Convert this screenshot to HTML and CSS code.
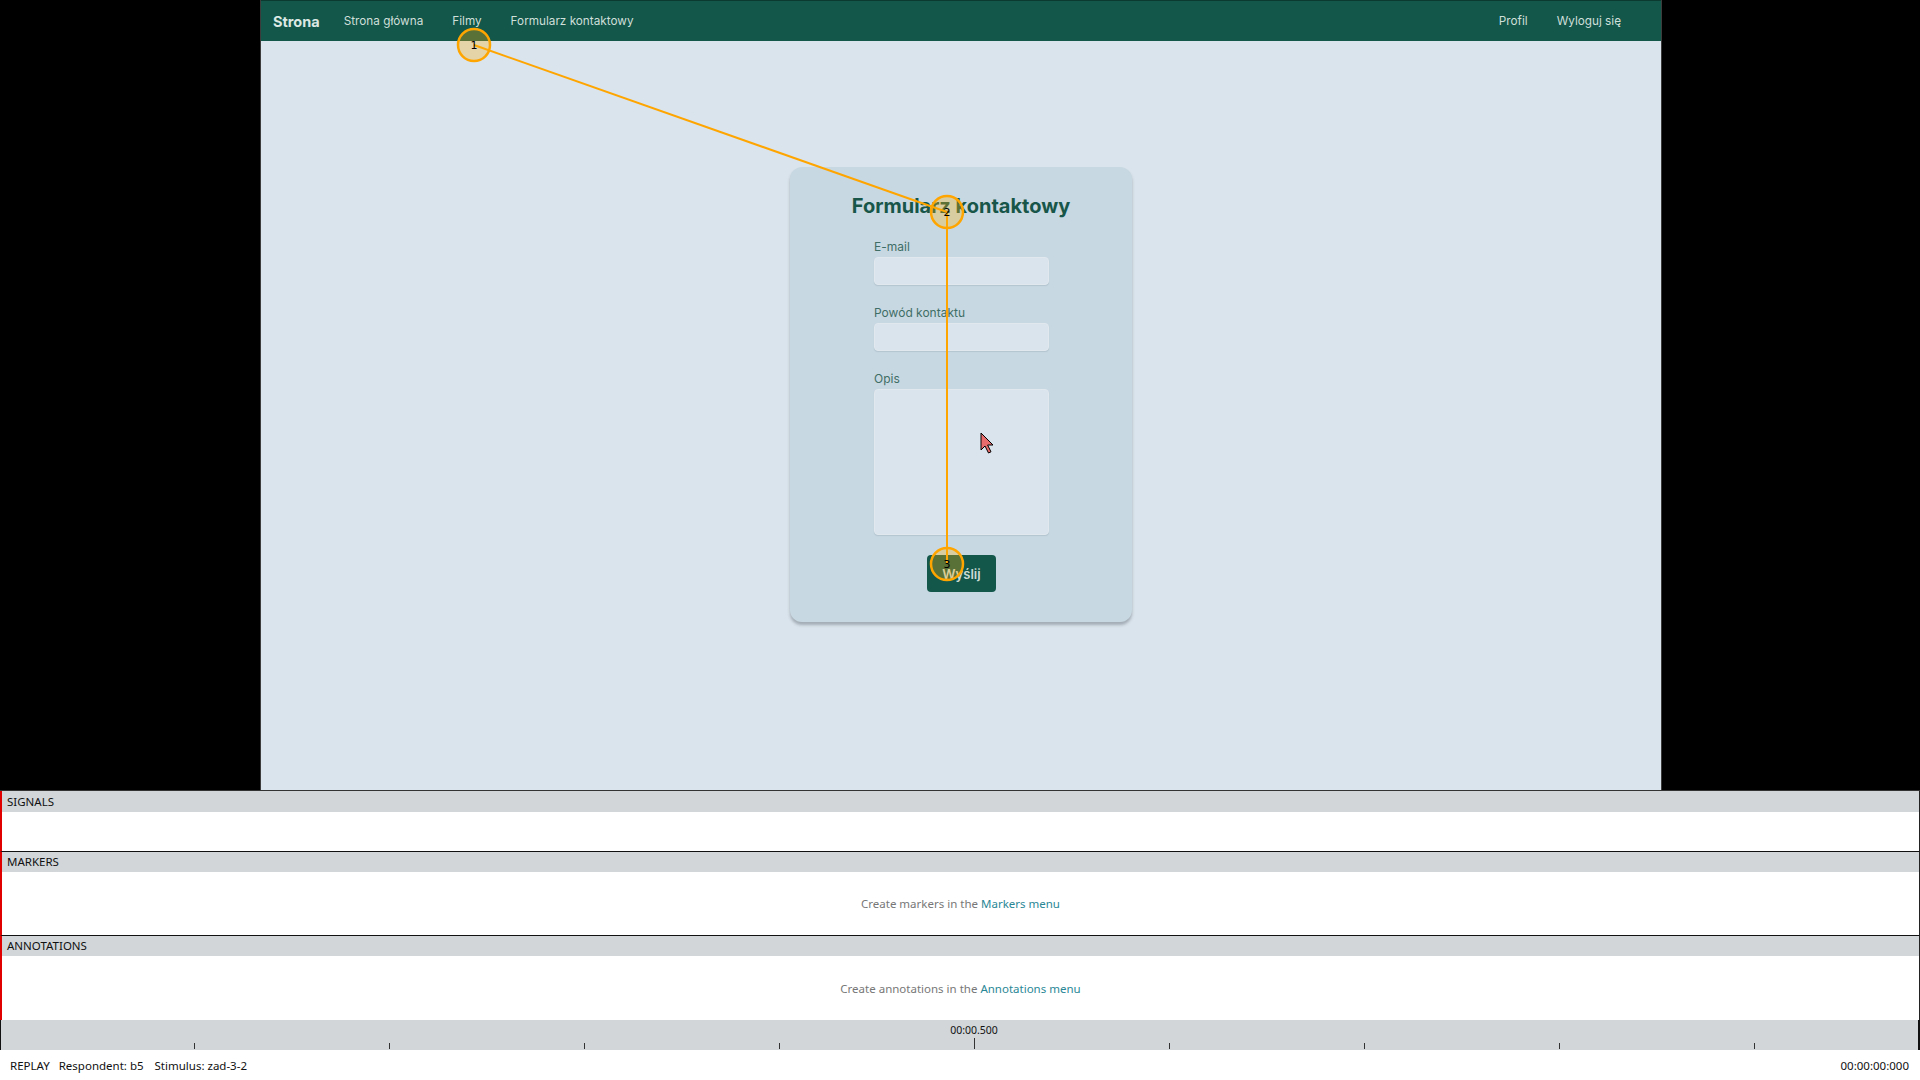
FILE: index.html
```html
<!DOCTYPE html>
<html lang="pl">
<head>
<meta charset="utf-8">
<title>Replay</title>
<link rel="stylesheet" href="styles.css">
</head>
<body>
<div class="screen">
  <div class="stage">
    <div class="browser">
      <nav class="navbar">
        <span class="brand">Strona</span>
        <a class="nav-link">Strona główna</a>
        <a class="nav-link">Filmy</a>
        <a class="nav-link">Formularz kontaktowy</a>
        <span class="spacer"></span>
        <a class="nav-link">Profil</a>
        <a class="nav-link">Wyloguj się</a>
      </nav>
      <main class="page">
        <section class="card">
          <h1 class="card-title">Formularz kontaktowy</h1>
          <form class="form">
            <label class="label">E-mail</label>
            <div class="input"></div>
            <label class="label">Powód kontaktu</label>
            <div class="input"></div>
            <label class="label">Opis</label>
            <div class="input textarea"></div>
            <div class="actions"><button type="button" class="btn">Wyślij</button></div>
          </form>
        </section>
      </main>
    </div>
    <svg class="gaze" width="1920" height="790" viewBox="0 0 1920 790">
      <line x1="474" y1="45" x2="947" y2="212" stroke="#ffa500" stroke-width="2"/>
      <line x1="947" y1="212" x2="947" y2="564" stroke="#ffa500" stroke-width="2"/>
      <circle cx="474" cy="45" r="16" fill="rgba(255,175,10,0.3)" stroke="#ffa500" stroke-width="2.5"/>
      <circle cx="947" cy="212" r="16" fill="rgba(255,175,10,0.3)" stroke="#ffa500" stroke-width="2.5"/>
      <circle cx="947" cy="564" r="16" fill="rgba(255,175,10,0.3)" stroke="#ffa500" stroke-width="2.5"/>
      <text x="474" y="49" class="num">1</text>
      <text x="947" y="216" class="num">2</text>
      <text x="947" y="568" class="num">3</text>
      <path d="M981 433 L981 450 L985 446 L988.5 453 L991 451.8 L987.6 445 L993 445 Z" fill="#e86c6c" stroke="#000" stroke-width="1" stroke-linejoin="round"/>
    </svg>
  </div>
  <div class="panel">
    <div class="sec-head first">SIGNALS</div>
    <div class="sec-body signals"></div>
    <div class="sec-head">MARKERS</div>
    <div class="sec-body markers">Create markers in the <span class="link">Markers menu</span></div>
    <div class="sec-head">ANNOTATIONS</div>
    <div class="sec-body annotations">Create annotations in the <span class="link">Annotations menu</span></div>
    <div class="timeline">
      <div class="tick"></div><div class="tick"></div><div class="tick"></div><div class="tick"></div>
      <div class="tick major"><span class="tick-label">00:00.500</span></div>
      <div class="tick"></div><div class="tick"></div><div class="tick"></div><div class="tick"></div>
    </div>
    <div class="status">
      <span class="st">REPLAY</span>
      <span class="st">Respondent: b5</span>
      <span class="st gap">Stimulus: zad-3-2</span>
      <span class="spacer"></span>
      <span class="st">00:00:00:000</span>
    </div>
  </div>
</div>
</body>
</html>
```

FILE: styles.css
```css
html, body {
  margin: 0;
  padding: 0;
  background: #000;
}
.screen {
  width: 1920px;
  height: 1080px;
  overflow: hidden;
  display: flex;
  flex-direction: column;
}
.stage {
  position: relative;
  height: 790px;
  flex: none;
  display: flex;
}
.browser {
  margin-left: 260px;
  width: 1400px;
  height: 790px;
  border-left: 1px solid #3c3c3c;
  border-right: 1px solid #3c3c3c;
  display: flex;
  flex-direction: column;
  background: #dae4ec;
  font-family: Inter, "Noto Sans", sans-serif;
}
.navbar {
  height: 41px;
  flex: none;
  box-sizing: border-box;
  border-top: 1px solid #0b3a30;
  background: #12574a;
  display: flex;
  align-items: center;
  padding: 0 40px 0 12px;
  gap: 29px;
}
.brand {
  color: #dbe8e3;
  font-weight: 700;
  font-size: 14.5px;
  margin-right: -5px;
}
.nav-link {
  color: #cfdfd9;
  font-size: 11.75px;
}
.spacer { flex: 1; }
.page {
  flex: 1;
  display: flex;
  justify-content: center;
  align-items: flex-start;
  padding-top: 126px;
}
.card {
  width: 342px;
  box-sizing: border-box;
  background: #c8d8e2;
  border-radius: 12px;
  box-shadow: 0 3px 3px rgba(60, 70, 80, 0.35);
  padding: 27px 0 30px;
  display: flex;
  flex-direction: column;
  align-items: center;
}
.card-title {
  margin: 0;
  font-size: 20px;
  line-height: 24px;
  font-weight: 700;
  color: #175649;
}
.form {
  width: 175px;
  margin-top: 21px;
  display: flex;
  flex-direction: column;
  margin-left: 1px;
}
.label {
  font-size: 12px;
  line-height: 16px;
  color: #3f6e66;
  margin-bottom: 2px;
}
.input {
  height: 28px;
  box-sizing: border-box;
  background: #dae4ec;
  border: 1px solid #e1e9ef;
  border-radius: 4px;
  box-shadow: 0 1px 1px rgba(90, 110, 130, 0.18);
  margin-bottom: 20px;
}
.textarea {
  height: 146px;
  margin-bottom: 20px;
}
.actions {
  display: flex;
  justify-content: center;
}
.btn {
  width: 69px;
  height: 37px;
  border: none;
  border-radius: 4px;
  background: #12574a;
  color: #cddbd5;
  font-family: Inter, "Noto Sans", sans-serif;
  font-weight: 600;
  font-size: 13px;
  padding: 0;
}
.gaze {
  position: absolute;
  left: 0;
  top: 0;
  pointer-events: none;
}
.num {
  font-family: "DejaVu Sans", sans-serif;
  font-size: 11px;
  text-anchor: middle;
  fill: #000;
}
.panel {
  height: 290px;
  flex: none;
  display: flex;
  flex-direction: column;
  background: #fff;
  border-top: 1px solid #333;
  box-sizing: border-box;
  font-family: "Noto Sans", "Open Sans", sans-serif;
  font-size: 11.5px;
  color: #111;
}
.sec-head {
  height: 20px;
  line-height: 20px;
  flex: none;
  background: #d2d6d9;
  padding-left: 5px;
  border-left: 2px solid #e00000;
  border-right: 1px solid #222;
}
.sec-head.first { height: 21px; line-height: 21px; }
.sec-body {
  flex: none;
  background: #fff;
  border-left: 2px solid #e00000;
  border-right: 1px solid #222;
  display: flex;
  align-items: center;
  justify-content: center;
  color: #777;
  font-size: 11.5px;
}
.signals { height: 39px; border-bottom: 1px solid #111; }
.markers { height: 63px; border-bottom: 1px solid #111; }
.annotations { height: 64px; }
.link { color: #2a8796; margin-left: 3px; }
.timeline {
  height: 30px;
  flex: none;
  box-sizing: border-box;
  background: #d2d6d9;
  border-left: 1px solid #111;
  border-right: 2px solid #111;
  display: flex;
  align-items: flex-end;
  padding-bottom: 1px;
}
.tick {
  width: 194px;
  height: 6px;
  border-right: 1px solid #333;
  flex: none;
  position: relative;
}
.tick:first-child { width: 193px; }
.tick.major { height: 11px; }
.tick-label {
  position: absolute;
  right: -30px;
  top: -15px;
  width: 60px;
  text-align: center;
  font-size: 10.5px;
  color: #111;
}
.status {
  height: 30px;
  flex: none;
  display: flex;
  align-items: center;
  padding: 0 11px 0 10px;
  gap: 9px;
  background: #fff;
  font-size: 11.5px;
  color: #111;
}
.gap { margin-left: 2px; }
```
